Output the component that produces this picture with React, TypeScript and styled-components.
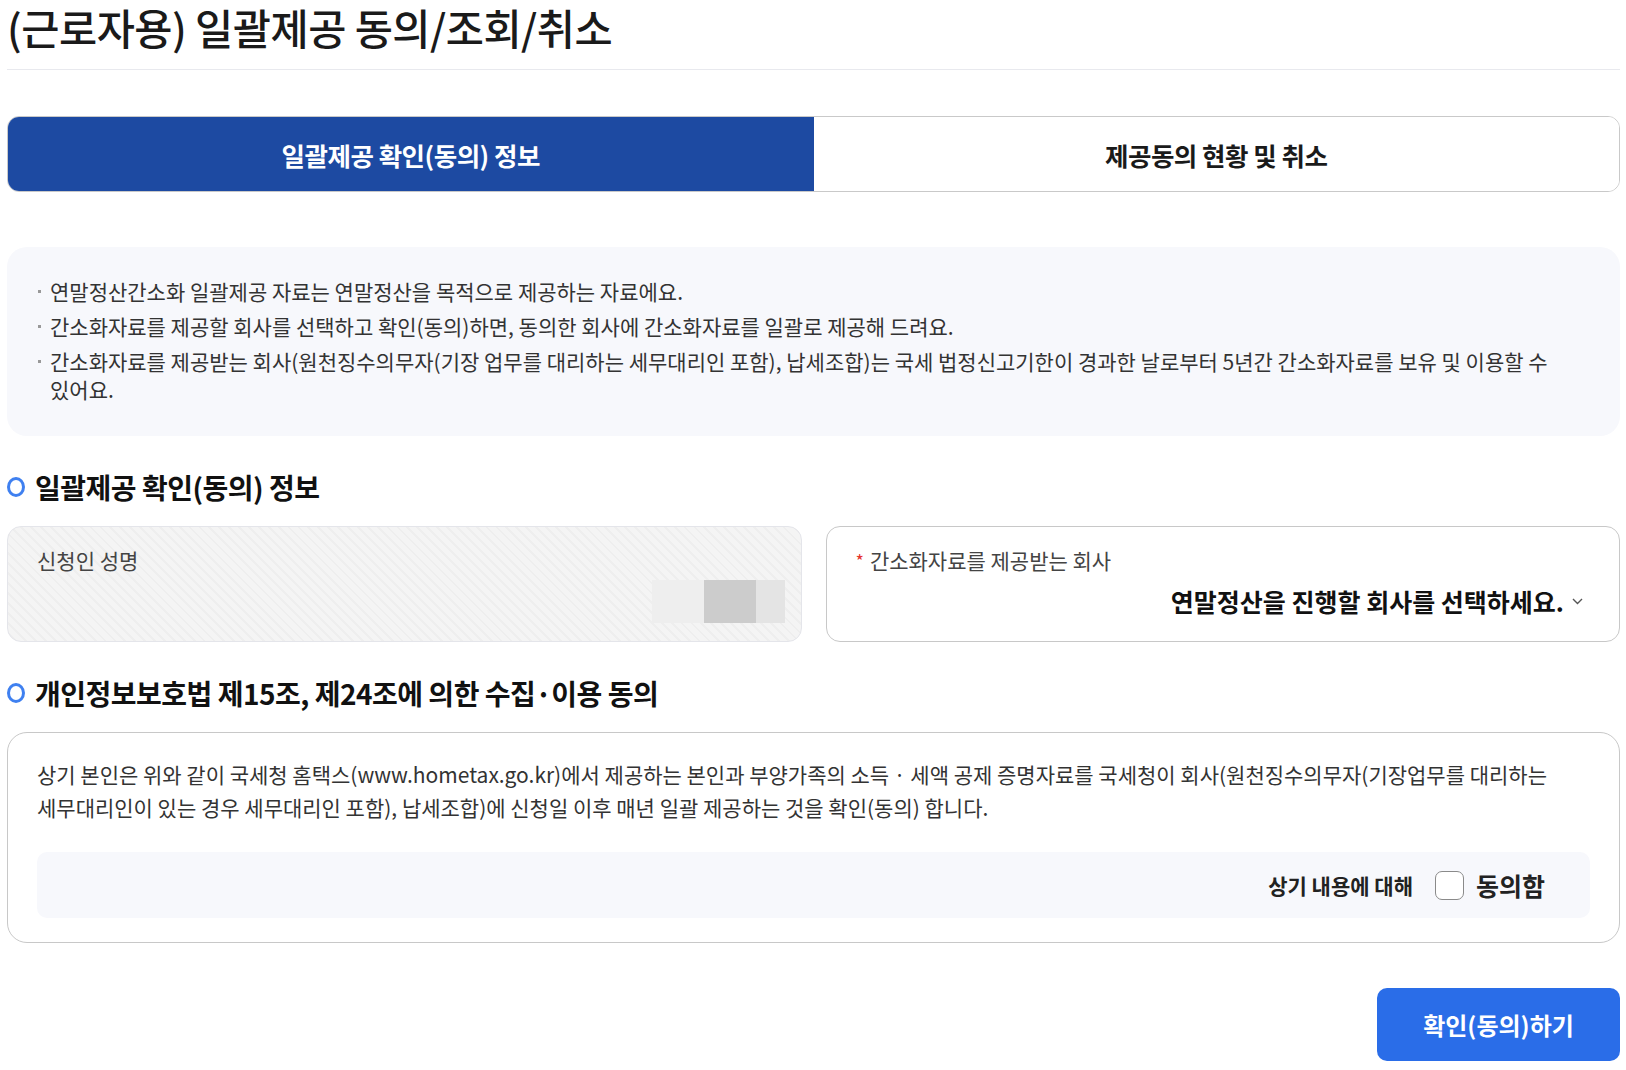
import React, { useState } from 'react';
import styled, { createGlobalStyle } from 'styled-components';

const GlobalStyle = createGlobalStyle`
    html, body {
        margin: 0;
        padding: 0;
        background: #fff;
    }

    body {
        font-family: "Noto Sans CJK KR", "Noto Sans", sans-serif;
        color: #222;
        word-break: keep-all;
    }

    * {
        box-sizing: border-box;
    }
`;

const Page = styled.div`
    width: 1613px;
    margin-left: 7px;
`;

const Title = styled.h1`
    margin: 0;
    font-size: 41.5px;
    line-height: 54px;
    font-weight: 500;
    color: #1a1a1a;
    letter-spacing: -0.5px;
    padding-bottom: 15px;
    border-bottom: 1px solid #e8e9ee;
`;

const Tabs = styled.div`
    display: grid;
    grid-template-columns: 1fr 1fr;
    height: 76px;
    margin-top: 46px;
    border: 1px solid #c9c9c9;
    border-radius: 12px;
    overflow: hidden;
`;

const Tab = styled.button<{ active?: boolean }>`
    border: none;
    margin: 0;
    font-family: inherit;
    font-size: 25.5px;
    font-weight: 700;
    letter-spacing: -0.5px;
    cursor: pointer;
    background-color: ${props => props.active ? '#1d4aa2' : '#fff'};
    color: ${props => props.active ? '#fff' : '#1a1a1a'};
`;

const InfoBox = styled.ul`
    list-style: none;
    margin: 55px 0 0;
    padding: 30px 50px 33px 36px;
    background-color: #f7f8fc;
    border-radius: 20px;
    display: flex;
    flex-direction: column;
    gap: 7px;
`;

const InfoItem = styled.li`
    position: relative;
    padding-left: 7px;
    font-size: 21px;
    line-height: 28px;
    color: #333;

    &::before {
        content: '';
        position: absolute;
        left: -5px;
        top: 13px;
        width: 3px;
        height: 3px;
        background-color: #999;
    }
`;

const SectionTitle = styled.h2`
    display: flex;
    align-items: center;
    gap: 10px;
    margin: 31px 0 19px;
    font-size: 28px;
    line-height: 40px;
    font-weight: 700;
    color: #111;
    letter-spacing: -0.5px;

    &::before {
        content: '';
        width: 12px;
        height: 14px;
        border: 3.5px solid #3f80f0;
        border-radius: 50%;
        flex-shrink: 0;
    }
`;

const FieldRow = styled.div`
    display: grid;
    grid-template-columns: 1fr 1fr;
    gap: 24px;
`;

const Field = styled.div<{ disabled?: boolean }>`
    height: 116px;
    border-radius: 14px;
    padding: 19px 16px 18px 29px;
    display: flex;
    flex-direction: column;
    justify-content: space-between;
    border: 1px solid ${props => props.disabled ? '#e4e5ea' : '#c8c8c8'};
    background: ${props => props.disabled
        ? 'repeating-linear-gradient(45deg, #f4f4f4 0px, #f4f4f4 5px, #eeeeee 5px, #eeeeee 7px)'
        : '#fff'};
`;

const FieldLabel = styled.div`
    font-size: 21px;
    line-height: 28px;
    color: #444;
    display: flex;
    align-items: center;
`;

const Required = styled.span`
    color: #e5322d;
    font-size: 18px;
    margin-right: 6px;
    line-height: 1;
`;

const Masked = styled.div`
    align-self: flex-end;
    display: flex;
    height: 43px;
`;

const MaskPart = styled.span<{ w: number; tone: string }>`
    width: ${props => props.w}px;
    background-color: ${props => props.tone};
`;

const Select = styled.button`
    align-self: flex-end;
    display: flex;
    align-items: center;
    gap: 8px;
    border: none;
    background: none;
    padding: 0;
    margin: 0 20px 6px 0;
    font-family: inherit;
    font-size: 25px;
    line-height: 32px;
    font-weight: 700;
    color: #111;
    cursor: pointer;
`;

const ConsentBox = styled.div`
    border: 1px solid #c8c8c8;
    border-radius: 20px;
    padding: 25px 29px 24px;
`;

const ConsentText = styled.p`
    margin: 0;
    font-size: 21px;
    line-height: 33px;
    color: #333;
`;

const AgreeRow = styled.label`
    display: flex;
    align-items: center;
    justify-content: flex-end;
    height: 66px;
    margin-top: 28px;
    padding-right: 45px;
    background-color: #f7f8fc;
    border-radius: 10px;
    cursor: pointer;
`;

const AgreeLead = styled.span`
    font-size: 21px;
    font-weight: 700;
    color: #222;
    margin-right: 22px;
`;

const CheckBox = styled.span<{ checked: boolean }>`
    width: 29px;
    height: 29px;
    border: 1.5px solid #8a8a8a;
    border-radius: 7px;
    background-color: ${props => props.checked ? '#2a6de8' : '#fff'};
    margin-right: 12px;
    display: flex;
    align-items: center;
    justify-content: center;
`;

const AgreeText = styled.span`
    font-size: 25px;
    font-weight: 700;
    color: #222;
`;

const Footer = styled.div`
    display: flex;
    justify-content: flex-end;
    margin-top: 45px;
`;

const SubmitButton = styled.button`
    width: 243px;
    height: 73px;
    border: none;
    border-radius: 10px;
    background-color: #2a6de8;
    color: #fff;
    font-family: inherit;
    font-size: 24px;
    font-weight: 600;
    cursor: pointer;
`;

const infoLines = [
    '연말정산간소화 일괄제공 자료는 연말정산을 목적으로 제공하는 자료에요.',
    '간소화자료를 제공할 회사를 선택하고 확인(동의)하면, 동의한 회사에 간소화자료를 일괄로 제공해 드려요.',
    '간소화자료를 제공받는 회사(원천징수의무자(기장 업무를 대리하는 세무대리인 포함), 납세조합)는 국세 법정신고기한이 경과한 날로부터 5년간 간소화자료를 보유 및 이용할 수 있어요.',
];

const App: React.FC = () => {
    const [tab, setTab] = useState(0);
    const [agreed, setAgreed] = useState(false);

    return (
        <>
            <GlobalStyle />
            <Page>
                <Title>(근로자용) 일괄제공 동의/조회/취소</Title>
                <Tabs>
                    <Tab active={tab === 0} onClick={() => setTab(0)}>일괄제공 확인(동의) 정보</Tab>
                    <Tab active={tab === 1} onClick={() => setTab(1)}>제공동의 현황 및 취소</Tab>
                </Tabs>

                <InfoBox>
                    {infoLines.map(line => <InfoItem key={line}>{line}</InfoItem>)}
                </InfoBox>

                <SectionTitle>일괄제공 확인(동의) 정보</SectionTitle>
                <FieldRow>
                    <Field disabled>
                        <FieldLabel>신청인 성명</FieldLabel>
                        <Masked>
                            <MaskPart w={52} tone="#eeeeee" />
                            <MaskPart w={52} tone="#cccccc" />
                            <MaskPart w={29} tone="#e4e4e4" />
                        </Masked>
                    </Field>
                    <Field>
                        <FieldLabel><Required>*</Required>간소화자료를 제공받는 회사</FieldLabel>
                        <Select>
                            연말정산을 진행할 회사를 선택하세요.
                            <svg width="11" height="7" viewBox="0 0 11 7" fill="none">
                                <path d="M1 1l4.5 4.5L10 1" stroke="#555" strokeWidth="1.4" />
                            </svg>
                        </Select>
                    </Field>
                </FieldRow>

                <SectionTitle>개인정보보호법 제15조, 제24조에 의한 수집·이용 동의</SectionTitle>
                <ConsentBox>
                    <ConsentText>
                        상기 본인은 위와 같이 국세청 홈택스(www.hometax.go.kr)에서 제공하는 본인과 부양가족의 소득 · 세액 공제 증명자료를 국세청이 회사(원천징수의무자(기장업무를 대리하는 세무대리인이 있는 경우 세무대리인 포함), 납세조합)에 신청일 이후 매년 일괄 제공하는 것을 확인(동의) 합니다.
                    </ConsentText>
                    <AgreeRow onClick={() => setAgreed(!agreed)}>
                        <AgreeLead>상기 내용에 대해</AgreeLead>
                        <CheckBox checked={agreed}>
                            {agreed && (
                                <svg width="16" height="12" viewBox="0 0 16 12" fill="none">
                                    <path d="M1.5 6l4.5 4.5L14.5 1.5" stroke="#fff" strokeWidth="2.2" />
                                </svg>
                            )}
                        </CheckBox>
                        <AgreeText>동의함</AgreeText>
                    </AgreeRow>
                </ConsentBox>

                <Footer>
                    <SubmitButton>확인(동의)하기</SubmitButton>
                </Footer>
            </Page>
        </>
    );
};

export default App;
